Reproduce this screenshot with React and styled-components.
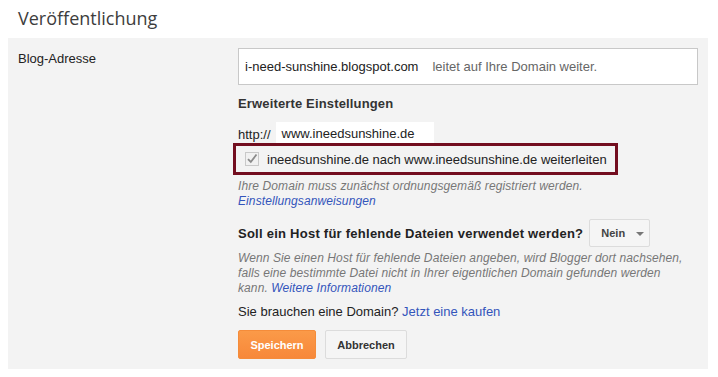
import React from "react";
import styled, { createGlobalStyle } from "styled-components";

const Global = createGlobalStyle`
  html, body { margin: 0; padding: 0; background: #fff; }
  body { font-family: "Liberation Sans", Arial, sans-serif; font-size: 13px; color: #222; }
`;

const Page = styled.div`
  width: 700px;
  margin-left: 8px;
`;

const Title = styled.h1`
  margin: 0;
  height: 38px;
  padding-left: 10px;
  display: flex;
  align-items: center;
  font-family: "Open Sans", sans-serif;
  font-weight: 400;
  font-size: 18px;
  color: #3d3d3d;
  box-sizing: border-box;
  padding-bottom: 2px;
`;

const Panel = styled.div`
  background: #f3f3f3;
  padding: 10px;
  display: grid;
  grid-template-columns: 220px 1fr;
`;

const Label = styled.div`
  font-size: 13px;
  line-height: 16px;
  color: #222;
  padding-top: 3px;
`;

const Column = styled.div`
  display: flex;
  flex-direction: column;
  align-items: flex-start;
`;

const AddressBox = styled.div`
  align-self: stretch;
  height: 37px;
  box-sizing: border-box;
  background: #fff;
  border: 1px solid #c8c8c8;
  display: flex;
  align-items: center;
  padding-left: 6px;
  font-size: 13px;
  gap: 14px;
`;

const Muted = styled.span`
  color: #666;
`;

const Heading = styled.div`
  margin-top: 11px;
  font-weight: bold;
  font-size: 13px;
  line-height: 16px;
  color: #333;
  letter-spacing: 0.15px;
`;

const HttpRow = styled.div`
  margin-top: 10px;
  display: flex;
  align-items: flex-start;
  gap: 5px;
  height: 21px;
`;

const Prefix = styled.span`
  line-height: 22px;
  padding-top: 2px;
  color: #222;
`;

const DomainInput = styled.div`
  width: 158px;
  height: 24px;
  box-sizing: border-box;
  background: #fff;
  padding: 4px 6px 0;
  font-size: 13px;
  color: #222;
`;

const RedirectRow = styled.label`
  margin-left: -5px;
  height: 32px;
  box-sizing: border-box;
  border: 3px solid #730e1f;
  display: flex;
  align-items: center;
  gap: 8px;
  padding: 0 8px 0 9px;
  font-size: 13px;
  color: #222;
`;

const Hint = styled.div`
  margin-top: 4px;
  font-style: italic;
  font-size: 12px;
  line-height: 15px;
  color: #777;
  letter-spacing: 0.1px;
`;

const Link = styled.a`
  color: #3355bb;
  text-decoration: none;
  cursor: pointer;
`;

const HostRow = styled.div`
  margin-top: 10px;
  display: flex;
  align-items: center;
  gap: 6px;
  font-weight: bold;
  font-size: 13px;
  color: #222;
  letter-spacing: 0.25px;
`;

const Dropdown = styled.div`
  width: 61px;
  height: 28px;
  box-sizing: border-box;
  background: #f5f5f5;
  border: 1px solid #dcdcdc;
  border-radius: 2px;
  display: flex;
  align-items: center;
  gap: 11px;
  padding-left: 11px;
  font-size: 11px;
  font-weight: bold;
  color: #444;
  letter-spacing: 0;
`;

const Caret = styled.span`
  width: 0;
  height: 0;
  border-left: 4px solid transparent;
  border-right: 4px solid transparent;
  border-top: 4px solid #777;
  margin-top: 1px;
`;

const Para = styled.div`
  margin-top: 8px;
  font-size: 13px;
  line-height: 16px;
  color: #222;
`;

const Buttons = styled.div`
  margin-top: 10px;
  display: flex;
  gap: 9px;
`;

const Button = styled.button`
  height: 29px;
  width: ${(p) => (p.$primary ? "78px" : "82px")};
  padding: 0;
  border-radius: 2px;
  font-family: "Liberation Sans", Arial, sans-serif;
  font-size: 11px;
  font-weight: bold;
  border: 1px solid ${(p) => (p.$primary ? "#f58c3a" : "#dcdcdc")};
  background: ${(p) =>
    p.$primary ? "linear-gradient(#fb9a48, #f7883a)" : "#f5f5f5"};
  color: ${(p) => (p.$primary ? "#fff" : "#333")};
`;

function Check() {
  return (
    <svg width="14" height="14" viewBox="0 0 14 14">
      <rect x="0.5" y="0.5" width="13" height="13" fill="#f1f1f1" stroke="#c9c9c9" />
      <path d="M3 7.2 L5.8 10 L11.5 2.5" fill="none" stroke="#8a8a8a" strokeWidth="1.8" />
    </svg>
  );
}

export default function App() {
  return (
    <Page>
      <Global />
      <Title>Veröffentlichung</Title>
      <Panel>
        <Label>Blog-Adresse</Label>
        <Column>
          <AddressBox>
            <span>i-need-sunshine.blogspot.com</span>
            <Muted>leitet auf Ihre Domain weiter.</Muted>
          </AddressBox>
          <Heading>Erweiterte Einstellungen</Heading>
          <HttpRow>
            <Prefix>http://</Prefix>
            <DomainInput>www.ineedsunshine.de</DomainInput>
          </HttpRow>
          <RedirectRow>
            <Check />
            ineedsunshine.de nach www.ineedsunshine.de weiterleiten
          </RedirectRow>
          <Hint>
            Ihre Domain muss zunächst ordnungsgemäß registriert werden.
            <br />
            <Link>Einstellungsanweisungen</Link>
          </Hint>
          <HostRow>
            Soll ein Host für fehlende Dateien verwendet werden?
            <Dropdown>
              Nein
              <Caret />
            </Dropdown>
          </HostRow>
          <Hint>
            Wenn Sie einen Host für fehlende Dateien angeben, wird Blogger dort nachsehen,
            <br />
            falls eine bestimmte Datei nicht in Ihrer eigentlichen Domain gefunden werden
            <br />
            kann. <Link>Weitere Informationen</Link>
          </Hint>
          <Para>
            Sie brauchen eine Domain? <Link>Jetzt eine kaufen</Link>
          </Para>
          <Buttons>
            <Button $primary>Speichern</Button>
            <Button>Abbrechen</Button>
          </Buttons>
        </Column>
      </Panel>
    </Page>
  );
}
